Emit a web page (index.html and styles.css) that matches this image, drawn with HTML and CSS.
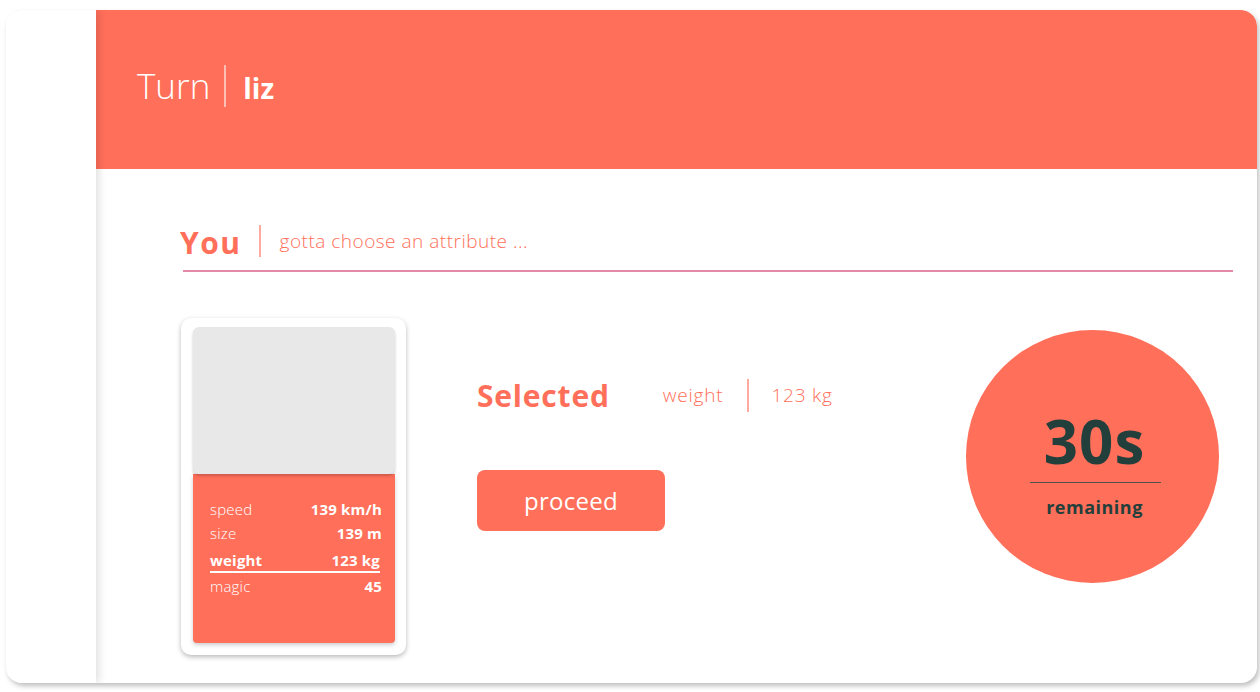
FILE: index.html
```html
<!DOCTYPE html>
<html>
<head>
<meta charset="utf-8">
<link rel="stylesheet" href="styles.css">
</head>
<body>
<div class="app">
  <aside class="sidebar"></aside>
  <main class="main">
    <header class="header">
      <span class="turn">Turn</span>
      <span class="vdiv"></span>
      <span class="player">liz</span>
    </header>
    <section class="content">
      <div class="you-row">
        <span class="you">You</span>
        <span class="vdiv coral"></span>
        <span class="hint">gotta choose an attribute ...</span>
      </div>
      <div class="play">
        <div class="card">
          <div class="card-img"></div>
          <div class="card-stats">
            <div class="stat"><span>speed</span><b>139 km/h</b></div>
            <div class="stat"><span>size</span><b>139 m</b></div>
            <div class="stat sel"><span>weight</span><b>123 kg</b></div>
            <div class="stat"><span>magic</span><b>45</b></div>
          </div>
        </div>
        <div class="middle">
          <div class="selected-row">
            <span class="selected">Selected</span>
            <span class="attr">weight</span>
            <span class="vdiv coral small"></span>
            <span class="attr">123 kg</span>
          </div>
          <button class="proceed">proceed</button>
        </div>
        <div class="timer">
          <div class="secs">30s</div>
          <div class="tline"></div>
          <div class="remaining">remaining</div>
        </div>
      </div>
    </section>
  </main>
</div>
</body>
</html>
```
FILE: styles.css
```css
* { box-sizing: border-box; }
html, body { margin: 0; padding: 0; background: #fff; }
body {
  font-family: "Open Sans", Lato, "Noto Sans", sans-serif;
  width: 1260px; height: 692px; overflow: hidden;
  padding: 10px 3px 9px 6px;
}
.app {
  display: flex;
  height: 673px;
  border-radius: 16px;
  background: #fff;
  box-shadow: 2px 3px 5px rgba(0,0,0,0.25);
  overflow: hidden;
}
.sidebar {
  width: 90px;
  flex: none;
  background: #fff;
  box-shadow: 3px 0 8px rgba(0,0,0,0.12);
  position: relative;
  z-index: 2;
}
.main { flex: 1; display: flex; flex-direction: column; }
.header {
  height: 159px;
  background: #ff6f5a;
  display: flex;
  align-items: center;
  padding-left: 41px;
  padding-bottom: 8px;
  color: #fff;
  border-top-right-radius: 16px;
}
.turn { font-size: 35px; font-weight: 300; }
.vdiv { display: inline-block; width: 2px; height: 42px; background: rgba(255,255,255,0.55); margin: 0 17px 0 14px; }
.player { font-size: 28px; font-weight: 700; margin-top: 4px; }
.content { padding: 56px 24px 0 87px; }
.you-row {
  display: flex; align-items: center;
  height: 32px;
}
.you { font-size: 30px; font-weight: 700; color: #ff6f5a; margin-left: -3px; margin-top: 2px; letter-spacing: 1.5px; }
.vdiv.coral { background: #ffaa9c; height: 32px; margin: 0 19px 0 17px; }
.hint { font-size: 19px; color: #ff6f5a; font-weight: 300; letter-spacing: 0.5px; }
.you-row + .play { border-top: 2px solid #e48aa8; margin-top: 13px; }
.play { display: flex; padding-top: 46px; }
.card {
  width: 225px; height: 337px;
  flex: none;
  margin-left: -2px;
  background: #fff;
  border-radius: 10px;
  box-shadow: 0 2px 5px rgba(0,0,0,0.28);
  padding: 9px 11px 12px 12px;
  display: flex; flex-direction: column;
}
.card-img {
  height: 147px;
  background: #e8e8e8;
  border-radius: 6px;
  box-shadow: 0 2px 3px rgba(0,0,0,0.2);
  position: relative; z-index: 1;
}
.card-stats {
  flex: 1;
  background: #ff6f5a;
  border-radius: 0 0 4px 4px;
  box-shadow: 0 2px 4px rgba(0,0,0,0.2);
  padding: 23px 13px 0 17px;
  color: #fff;
}
.stat { display: flex; justify-content: space-between; font-size: 15px; height: 24px; align-items: center; letter-spacing: 0.2px; }
.stat span { font-weight: 300; }
.stat b { font-weight: 700; }
.stat.sel { height: 28px; align-items: flex-end; padding-bottom: 1px; border-bottom: 2px solid #fff; margin-right: 2px; margin-bottom: 1px; }
.stat.sel span { font-weight: 700; }
.middle { margin-left: 71px; padding-top: 60px; }
.selected-row { display: flex; align-items: center; height: 34px; }
.selected { font-size: 30px; font-weight: 700; color: #ff6f5a; margin-right: 53px; letter-spacing: 0.8px; }
.attr { font-size: 19px; font-weight: 300; color: #ff6f5a; letter-spacing: 0.8px; }
.vdiv.small { height: 33px; margin: 0 22px 0 24px; }
.proceed {
  display: block;
  margin-top: 58px;
  width: 188px; height: 61px;
  background: #ff6f5a;
  border: none; border-radius: 8px;
  color: #fff;
  font-family: "Open Sans", sans-serif;
  font-size: 24px;
  letter-spacing: 0.3px;
}
.timer {
  margin-left: auto;
  margin-right: 14px;
  margin-top: 12px;
  width: 253px; height: 253px;
  border-radius: 50%;
  background: #ff6f5a;
  display: flex; flex-direction: column; align-items: center;
  padding-top: 70px;
  color: #233f3b;
}
.secs { font-size: 60px; font-weight: 700; line-height: 82px; letter-spacing: 1px; margin-left: 4px; }
.tline { width: 131px; height: 1px; background: #4a5552; margin-left: 6px; }
.remaining { font-size: 18px; font-weight: 700; margin-top: 12px; letter-spacing: 0.5px; margin-left: 4px; }
```
